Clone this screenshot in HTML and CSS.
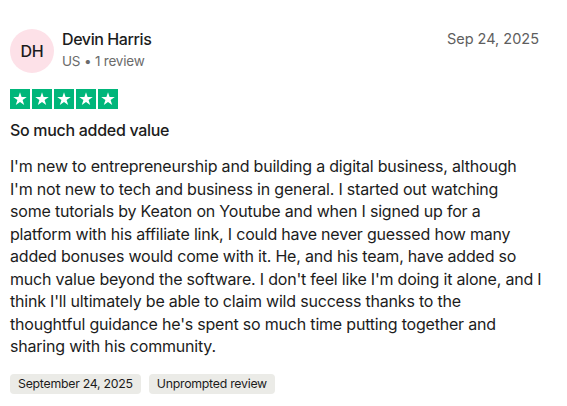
FILE: index.html
```html
<!DOCTYPE html>
<html>
<head>
<meta charset="utf-8">
<link rel="stylesheet" href="styles.css">
</head>
<body>
<article class="review">
  <header class="head">
    <div class="avatar">DH</div>
    <div class="who">
      <div class="name">Devin Harris</div>
      <div class="meta">US • 1 review</div>
    </div>
    <time class="date">Sep 24, 2025</time>
  </header>
  <div class="stars">
    <span class="star"><svg viewBox="0 0 20 20"><path d="M10 3.2l1.6 4.9h5.2l-4.2 3 1.6 4.9L10 13l-4.2 3 1.6-4.9-4.2-3h5.2z" fill="#fff"/></svg></span>
    <span class="star"><svg viewBox="0 0 20 20"><path d="M10 3.2l1.6 4.9h5.2l-4.2 3 1.6 4.9L10 13l-4.2 3 1.6-4.9-4.2-3h5.2z" fill="#fff"/></svg></span>
    <span class="star"><svg viewBox="0 0 20 20"><path d="M10 3.2l1.6 4.9h5.2l-4.2 3 1.6 4.9L10 13l-4.2 3 1.6-4.9-4.2-3h5.2z" fill="#fff"/></svg></span>
    <span class="star"><svg viewBox="0 0 20 20"><path d="M10 3.2l1.6 4.9h5.2l-4.2 3 1.6 4.9L10 13l-4.2 3 1.6-4.9-4.2-3h5.2z" fill="#fff"/></svg></span>
    <span class="star"><svg viewBox="0 0 20 20"><path d="M10 3.2l1.6 4.9h5.2l-4.2 3 1.6 4.9L10 13l-4.2 3 1.6-4.9-4.2-3h5.2z" fill="#fff"/></svg></span>
  </div>
  <h2 class="title">So much added value</h2>
  <p class="text">I'm new to entrepreneurship and building a digital business, although<br>I'm not new to tech and business in general. I started out watching<br>some tutorials by Keaton on Youtube and when I signed up for a<br>platform with his affiliate link, I could have never guessed how many<br>added bonuses would come with it. He, and his team, have added so<br>much value beyond the software. I don't feel like I'm doing it alone, and I<br>think I'll ultimately be able to claim wild success thanks to the<br>thoughtful guidance he's spent so much time putting together and<br>sharing with his community.</p>
  <div class="tags">
    <span class="tag">September 24, 2025</span>
    <span class="tag">Unprompted review</span>
  </div>
</article>
</body>
</html>
```
FILE: styles.css
```css
* { box-sizing: border-box; }
html, body { margin: 0; background: #ffffff; }
body {
  font-family: Inter, "Noto Sans", sans-serif;
  color: #1c1c1c;
}
.review {
  width: 550px;
  padding: 29px 0 0 10px;
}
.head {
  display: flex;
  align-items: flex-start;
  margin-right: 11px;
}
.avatar {
  width: 44px;
  height: 44px;
  border-radius: 50%;
  background: #fde1e8;
  display: flex;
  align-items: center;
  justify-content: center;
  font-size: 16px;
  font-weight: 500;
  letter-spacing: -0.2px;
  color: #1c1c1c;
  flex: none;
}
.who {
  margin-left: 8px;
  flex: 1;
}
.name {
  font-size: 16px;
  font-weight: 500;
  letter-spacing: -0.4px;
  line-height: 20px;
}
.meta {
  margin-top: 3px;
  font-size: 13.5px;
  letter-spacing: -0.2px;
  line-height: 18px;
  color: #6b6b6b;
}
.date {
  font-size: 14.5px;
  line-height: 20px;
  color: #5e5e5e;
}
.stars {
  display: flex;
  gap: 2px;
  margin-top: 16px;
}
.star {
  width: 20px;
  height: 20px;
  background: #00b67a;
  display: block;
}
.star svg { width: 20px; height: 20px; display: block; }
.title {
  margin: 10px 0 0;
  font-size: 16px;
  font-weight: 500;
  letter-spacing: -0.3px;
  line-height: 22px;
}
.text {
  margin: 14px 0 0;
  font-size: 16px;
  letter-spacing: -0.2px;
  line-height: 22.5px;
  color: #1c1c1c;
  white-space: nowrap;
}
.tags {
  display: flex;
  gap: 8px;
  margin-top: 16px;
}
.tag {
  background: #ebebe7;
  border-radius: 4px;
  font-size: 12.3px;
  letter-spacing: -0.25px;
  line-height: 20px;
  padding: 0 8px;
  color: #1c1c1c;
}
```
